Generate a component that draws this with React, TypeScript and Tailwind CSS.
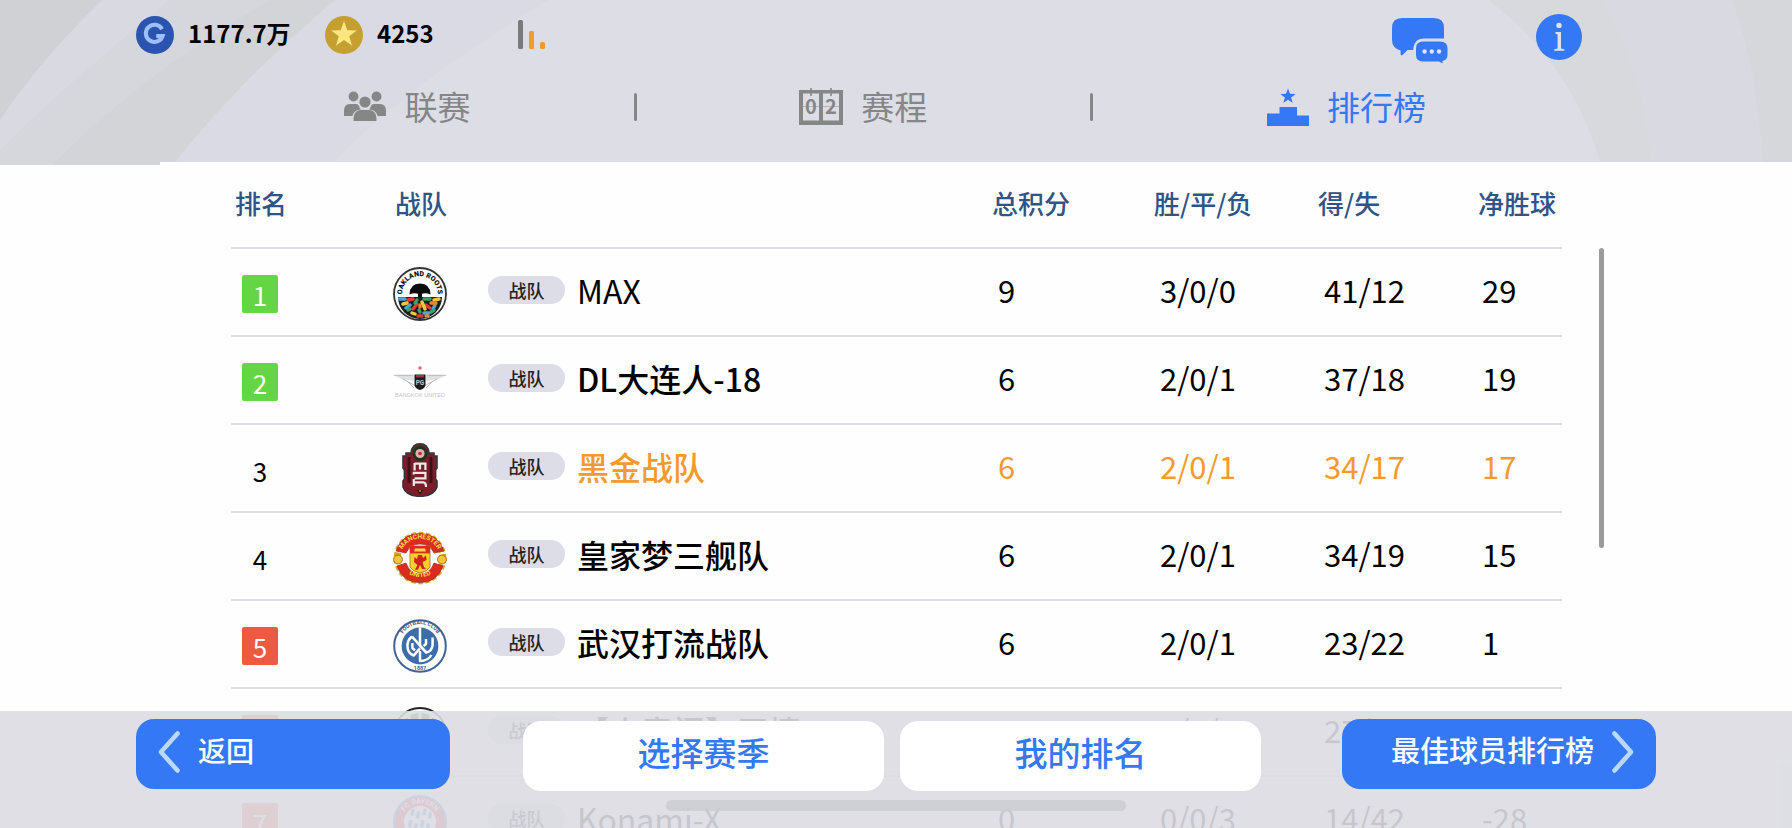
import type { ReactNode } from "react";
import { clsx } from "clsx";

type Team = {
  rank: number;
  logo: ReactNode;
  name: string;
  points: number;
  record: string;
  goals: string;
  diff: string;
  latin?: boolean;
  mine?: boolean;
};

const STAR = "M20 3 L24.4 15.2 L37 15.6 L27 23.4 L30.6 35.6 L20 28.4 L9.4 35.6 L13 23.4 L3 15.6 L15.6 15.2 Z";

function CoinIcon() {
  return (
    <svg viewBox="0 0 38 38" className="h-[38px] w-[38px]" aria-hidden="true">
      <circle cx="19" cy="19" r="19" fill="#2b54b0" />
      <path d="M26 13.2 A8.6 8.6 0 1 0 26.6 20 H20.2" fill="none" stroke="#9cc0ff" strokeWidth="4" />
    </svg>
  );
}

function StarCoinIcon() {
  return (
    <svg viewBox="0 0 38 38" className="h-[38px] w-[38px]" aria-hidden="true">
      <circle cx="19" cy="19" r="19" fill="#c5a030" />
      <path d={STAR} transform="translate(4 2.8) scale(0.75)" fill="#ffe680" />
    </svg>
  );
}

function SignalIcon() {
  return (
    <svg viewBox="0 0 28 30" className="h-[30px] w-7" aria-hidden="true">
      <rect x="0" y="0" width="5" height="29" rx="1.5" fill="#7a7a7c" />
      <rect x="11" y="11" width="5" height="18" rx="1.5" fill="#f39a2f" />
      <rect x="22" y="22" width="5" height="7" rx="1.5" fill="#f39a2f" />
    </svg>
  );
}

function ChatIcon() {
  return (
    <svg viewBox="0 0 56 46" className="h-[46px] w-14" aria-hidden="true">
      <path
        d="M10 0 H42 Q52 0 52 10 V20.6 H32 Q22 20.6 21.2 32 H15.5 L10.5 37 Q8.6 38.2 8.6 36 V32.6 Q0 30 0 22 V10 Q0 0 10 0 Z"
        fill="#3478f6"
      />
      <path
        d="M31 23.5 H48 Q55.5 23.5 55.5 30 V37 Q55.5 42 50.5 43 V45.6 L47 43.4 H31 Q24 43.4 24 37 V30 Q24 23.5 31 23.5 Z"
        fill="#3478f6"
      />
      <g fill="#dfe6f8">
        <circle cx="32.6" cy="33.5" r="2.2" />
        <circle cx="39.8" cy="33.5" r="2.2" />
        <circle cx="47" cy="33.5" r="2.2" />
      </g>
    </svg>
  );
}

function InfoIcon() {
  return (
    <svg viewBox="0 0 46 46" className="h-[46px] w-[46px]" aria-hidden="true">
      <circle cx="23" cy="23" r="23" fill="#3478f6" />
      <g fill="#dfe3ee">
        <circle cx="23" cy="11.4" r="2.7" />
        <path d="M19.4 18 H25 V34.4 L28.4 35.2 V36.8 H18.2 V35.2 L21.6 34.4 V20.4 L19.4 19.6 Z" />
      </g>
    </svg>
  );
}

function GroupIcon() {
  return (
    <svg viewBox="0 0 42 32" className="h-8 w-[42px]" fill="#868686" aria-hidden="true">
      <circle cx="9.5" cy="5.5" r="4.9" />
      <circle cx="32.5" cy="5.5" r="4.9" />
      <path d="M0 25 V20 Q0 13 6 13 H12 Q14.5 13 15 15 Q15.5 17.6 17 18.6 Q10 19 8.4 25 Z" />
      <path d="M42 25 V20 Q42 13 36 13 H30 Q27.5 13 27 15 Q26.5 17.6 25 18.6 Q32 19 33.6 25 Z" />
      <circle cx="21" cy="11" r="5.6" />
      <path d="M9.6 30 V26.5 Q10.4 19 17 19 H25 Q31.6 19 32.4 26.5 V30 Z" />
    </svg>
  );
}

function ScoreboardIcon() {
  return (
    <svg viewBox="0 0 44 38" className="h-[38px] w-11" aria-hidden="true">
      <path
        fillRule="evenodd"
        d="M0 2 H44 V37 H0 Z M4 5.5 V32.5 H20 V5.5 Z M24 5.5 V32.5 H40 V5.5 Z"
        fill="#868686"
      />
      <path d="M12 0 V8 M32 0 V8" stroke="#868686" strokeWidth="1.6" />
      <path d="M4 18.5 H20 M24 18.5 H40" stroke="#b4b4b8" strokeWidth="1" />
      <text x="12" y="26.4" textAnchor="middle" fontSize="20" fontWeight="700" fill="#868686">0</text>
      <text x="32" y="26.4" textAnchor="middle" fontSize="20" fontWeight="700" fill="#868686">2</text>
    </svg>
  );
}

function PodiumIcon() {
  return (
    <svg viewBox="0 0 42 38" className="h-[38px] w-[42px]" fill="#3478f6" aria-hidden="true">
      <path d={STAR} transform="translate(12 -1) scale(0.45)" />
      <path d="M0 25.5 H12.5 V19 H30 V27.5 H42 V38 H0 Z" />
    </svg>
  );
}

function OaklandLogo() {
  return (
    <svg viewBox="0 0 54 54" className="h-[54px] w-[54px]" aria-hidden="true">
      <defs>
        <path id="oak-arc" d="M9.8 32 A17.9 17.9 0 1 1 44.2 32" />
        <clipPath id="oak-roots">
          <path d="M5 30 H49 A22 22 0 0 1 5 30 Z" />
        </clipPath>
      </defs>
      <circle cx="27" cy="27" r="26" fill="#fff" stroke="#333" strokeWidth="1.8" />
      <text fontSize="7" fontWeight="900" fill="#111" className="font-['Roboto',sans-serif]">
        <textPath href="#oak-arc" startOffset="50%" textAnchor="middle">OAKLAND ROOTS</textPath>
      </text>
      <path d="M16.5 27.5 Q16.5 17 27 16.6 Q37.5 17 37.5 27.5 Q33 25.6 29 26.8 V31 H25 V26.8 Q21 25.6 16.5 27.5 Z" fill="#0d0d0d" />
      <g clipPath="url(#oak-roots)">
        <rect x="4" y="30" width="46" height="22" fill="#1c1c1c" />
        <g strokeWidth="3.4" strokeLinecap="round" fill="none">
          <path d="M6 32 L12 32 M13 41 L17 38 M31 46 L36 46 M42 38 L40 42" stroke="#4aa7dc" />
          <path d="M15 33 L20 32 M24 37 L20 42 M33 38 L37 41 M25 49 L29 49" stroke="#e23b34" />
          <path d="M10 37 L14 36 M29 35 L32 42 M41 33 L46 32 M19 46 L22 47" stroke="#f0c63e" />
          <path d="M31 32 L37 32 M24 33 L22 36 M17 42 L15 43 M38 45 L41 43 M26 43 L27 45" stroke="#35a368" />
          <path d="M38 36 L43 36 M27 38 L27 40 M33 49 L35 49" stroke="#ee8535" />
        </g>
      </g>
    </svg>
  );
}

function WingsLogo() {
  return (
    <svg viewBox="0 0 54 54" className="h-[54px] w-[54px]" aria-hidden="true">
      <circle cx="27" cy="13" r="1.8" fill="#e8706c" />
      <path d="M1 20 H21 V26 L16 25 Q8 25 1 20 Z M53 20 H33 V26 L38 25 Q46 25 53 20 Z" fill="#dfe0e1" />
      <path d="M1 20.3 H20 M53 20.3 H34 M10 24 L21 30 M44 24 L33 30 M14 26 L21 33 M40 26 L33 33" stroke="#b4b5b6" strokeWidth="0.9" />
      <path d="M21.5 19.5 H32.5 V30.5 Q31.5 33.5 27 35 Q22.5 33.5 21.5 30.5 Z" fill="#1b1b1d" />
      <path d="M23 20 H31 V22.4 H23 Z" fill="#b03131" />
      <text x="27" y="30" textAnchor="middle" fontSize="6.4" fontWeight="700" fill="#c6c6c6" className="font-['Roboto',sans-serif]">PG</text>
      <text x="27" y="42" textAnchor="middle" fontSize="5.6" fill="#c4c4c6" className="font-['Liberation_Sans',sans-serif]">BANGKOK UNITED</text>
    </svg>
  );
}

function MaroonLogo() {
  return (
    <svg viewBox="0 0 54 54" className="h-[54px] w-[54px]" aria-hidden="true">
      <path
        d="M18 10 Q19 0.8 27 0.8 Q35 0.8 36 10 H41 V13 H44 V25 L42.6 27 V36 L44 38 V44 Q41 53 27 53.4 Q13 53 10 44 V38 L11.4 36 V27 L10 25 V13 H13 V10 Z"
        fill="#7b1d28" stroke="#36343f" strokeWidth="1.6"
      />
      <path d="M16 14 V40 M38 14 V40" stroke="#3d1119" strokeWidth="3" />
      <circle cx="27" cy="10.5" r="7.4" fill="#1e3320" />
      <circle cx="27" cy="10.5" r="4.6" fill="#e9aeb0" />
      <circle cx="27" cy="10.5" r="1.8" fill="#b92a38" />
      <g fill="none" stroke="#efe8e8" strokeWidth="2.2">
        <path d="M21.6 20.6 H32.4 V27 M21.6 20 V27.4 M27 21 V26.4" />
        <path d="M20.8 31.4 V29.8 H32.4 V35.4 H21.6 M20.8 39.4 H30.4 Q33 39.6 33 44 M20.8 36 V43" />
      </g>
      <path d="M24 47 L27 51.4 L30 47 Z" fill="#17120f" />
      <circle cx="27" cy="48" r="1" fill="#d99a3f" />
    </svg>
  );
}

function ManchesterLogo() {
  return (
    <svg viewBox="0 0 54 54" className="h-[54px] w-[54px]" aria-hidden="true">
      <defs>
        <path id="mu-top" d="M7 25 A20.2 20.2 0 0 1 47 25" />
        <path id="mu-bottom" d="M8 36 A23 23 0 0 0 46 36" />
      </defs>
      <circle cx="27" cy="27" r="22.8" fill="none" stroke="#d9a62c" strokeWidth="7" strokeDasharray="4.2 2.4" />
      <circle cx="27" cy="27" r="18" fill="#fff" />
      <path d="M3 20 Q9 2.6 27 2.6 Q45 2.6 51 20 L41 22 Q37 13 27 13 Q17 13 13 22 Z" fill="#da2c20" stroke="#8f3a1c" strokeWidth="0.7" />
      <path d="M4 35 L13 32 Q17 43 27 43 Q37 43 41 32 L50 35 Q44 51.6 27 51.6 Q10 51.6 4 35 Z" fill="#da2c20" stroke="#8f3a1c" strokeWidth="0.7" />
      <text fontSize="6.6" fontWeight="700" fill="#ffd94a" className="font-['Roboto',sans-serif]">
        <textPath href="#mu-top" startOffset="50%" textAnchor="middle">MANCHESTER</textPath>
      </text>
      <text fontSize="6.6" fontWeight="700" fill="#ffd94a" className="font-['Roboto',sans-serif]">
        <textPath href="#mu-bottom" startOffset="50%" textAnchor="middle">UNITED</textPath>
      </text>
      <circle cx="5" cy="28.5" r="4.4" fill="#f5c537" stroke="#a85c1e" strokeWidth="0.9" />
      <circle cx="49" cy="28.5" r="4.4" fill="#f5c537" stroke="#a85c1e" strokeWidth="0.9" />
      <path d="M17 15 H37 V36 Q35 40 27 42 Q19 40 17 36 Z" fill="#f9cf2e" stroke="#a8701e" strokeWidth="0.8" />
      <path d="M17 15 H37 V22.4 H17 Z" fill="#da2c20" />
      <path d="M21 20.6 L22 17.6 H32 L33 20.6 Z" fill="#ffd94a" />
      <path d="M25 24 H29 L30 27 L33 24.6 L33.6 29 L29.6 31 L31 36 L33 38 H29 L27 34 L25 38.8 H22 L24.4 34 L21 31 L21.4 26 L24 28 Z" fill="#cf2419" />
    </svg>
  );
}

function BlueClubLogo() {
  return (
    <svg viewBox="0 0 54 54" className="h-[54px] w-[54px]" aria-hidden="true">
      <defs>
        <path id="bc-top" d="M7.6 31 A20.2 20.2 0 1 1 46.4 31" />
      </defs>
      <circle cx="27" cy="27" r="25.8" fill="#fff" stroke="#3f6491" strokeWidth="2" />
      <circle cx="27" cy="27" r="18.4" fill="#3b6daa" />
      <text fontSize="5.4" fontWeight="700" fill="#3b5f8f" className="font-['Roboto',sans-serif]">
        <textPath href="#bc-top" startOffset="50%" textAnchor="middle">FOOTBALL CLUB</textPath>
      </text>
      <text x="27" y="50.6" textAnchor="middle" fontSize="5.4" fontWeight="700" fill="#3b5f8f" className="font-['Roboto',sans-serif]">1887</text>
      <g fill="none" stroke="#fff" strokeWidth="2.5" strokeLinejoin="round">
        <path d="M27 8.6 V27 L33.4 33.6 Q39 32 39.6 26 V18.6" />
        <path d="M33 20 V25 L30.6 27 M19 17.6 Q14.4 21 14.4 27 Q14.6 34 20.6 36.6 L27 29.4" />
        <path d="M19 17.6 L33.4 33.6 M19.4 24 V29 L22 31.4 M27 32 V42 Q35 42 38.4 36" />
      </g>
    </svg>
  );
}

function StripedLogo() {
  return (
    <svg viewBox="0 0 54 54" className="h-[54px] w-[54px]" aria-hidden="true">
      <circle cx="27" cy="27" r="26" fill="#fff" stroke="#222" strokeWidth="2" />
      <circle cx="27" cy="27" r="21" fill="#4b4b50" />
      <path d="M16 9 L21 46 M27 5 V49 M38 9 L33 46" stroke="#fff" strokeWidth="3" />
    </svg>
  );
}

function BayernLogo() {
  return (
    <svg viewBox="0 0 54 54" className="h-[54px] w-[54px]" aria-hidden="true">
      <defs>
        <path id="fcb-top" d="M8.6 32 A19 19 0 1 1 45.4 32" />
        <clipPath id="fcb-core">
          <circle cx="27" cy="27" r="15" />
        </clipPath>
      </defs>
      <circle cx="27" cy="27" r="26" fill="#e0283c" stroke="#3c86c8" strokeWidth="2" />
      <circle cx="27" cy="27" r="16" fill="#fff" />
      <text fontSize="7" fontWeight="700" fill="#fff" className="font-['Roboto',sans-serif]">
        <textPath href="#fcb-top" startOffset="50%" textAnchor="middle">FC BAYERN</textPath>
      </text>
      <g clipPath="url(#fcb-core)" stroke="#3c86c8" strokeWidth="3.4" strokeDasharray="7 5">
        <path d="M14 44 L21 10 M20 47 L27 10 M26 44 L33 10 M32 47 L39 10" />
      </g>
    </svg>
  );
}

function Chevron({ flip }: { flip?: boolean }) {
  return (
    <svg viewBox="0 0 22 42" className={clsx("h-[42px] w-[22px]", flip && "rotate-180")} aria-hidden="true">
      <path d="M19.5 2.5 L3 21 L19.5 39.5" fill="none" stroke="#bcd8ff" strokeWidth="4.6" strokeLinecap="round" strokeLinejoin="round" />
    </svg>
  );
}

// Curved stripes behind the top bar
function HeaderBackdrop() {
  return (
    <svg viewBox="0 0 1792 165" preserveAspectRatio="none" className="absolute top-0 left-0 h-[165px] w-full" aria-hidden="true">
      <path d="M0 0 H1792 V162 H160 V165 H0 Z" fill="#dddde6" />
      <path d="M0 0 H548 Q400 90 335 162 H160 V165 H0 Z" fill="#d9dae3" />
      <path d="M260 0 H335 Q240 80 175 162 H160 V165 H48 Q140 70 260 0 Z" fill="#d3d4d8" />
      <path d="M160 0 H270 Q140 75 52 165 H0 V120 Z" fill="#d6d7dd" />
      <path d="M102 0 H170 Q60 90 0 150 V120 Q40 60 102 0 Z" fill="#d8d9e1" />
      <path d="M0 0 H102 Q40 60 0 120 Z" fill="#d0d1d4" />
      <path d="M1488 0 H1792 V162 H1600 Q1570 60 1488 0 Z" fill="#d8d9dd" />
      <path d="M1590 0 H1732 Q1758 70 1762 162 H1651 Q1645 70 1600 0 Z" fill="#d9dae1" />
      <path d="M1732 0 H1792 V162 H1762 Q1758 70 1732 0 Z" fill="#d6d7da" />
    </svg>
  );
}

const teams: Team[] = [
  { rank: 1, logo: <OaklandLogo />, name: "MAX", points: 9, record: "3/0/0", goals: "41/12", diff: "29", latin: true },
  { rank: 2, logo: <WingsLogo />, name: "DL大连人-18", points: 6, record: "2/0/1", goals: "37/18", diff: "19" },
  { rank: 3, logo: <MaroonLogo />, name: "黑金战队", points: 6, record: "2/0/1", goals: "34/17", diff: "17", mine: true },
  { rank: 4, logo: <ManchesterLogo />, name: "皇家梦三舰队", points: 6, record: "2/0/1", goals: "34/19", diff: "15" },
  { rank: 5, logo: <BlueClubLogo />, name: "武汉打流战队", points: 6, record: "2/0/1", goals: "23/22", diff: "1" },
  { rank: 6, logo: <StripedLogo />, name: "【小意阁】王情", points: 3, record: "1/0/2", goals: "27/25", diff: "2" },
  { rank: 7, logo: <BayernLogo />, name: "Konami-X", points: 0, record: "0/0/3", goals: "14/42", diff: "-28", latin: true },
];

function TeamRow({ team }: { team: Team }) {
  return (
    <tr className={clsx("h-[88px] border-b-2 border-[#dcdce2]", team.mine ? "text-[#f39a2f]" : "text-black")}>
      <td className="pt-1 pl-[11px]">
        <span
          className={clsx(
            "flex h-[38px] w-9 items-center justify-center rounded-xs text-[26px]",
            team.rank <= 2 && "bg-[#64d645] text-white",
            team.rank >= 5 && "bg-[#ec5a42] text-white",
            team.rank > 2 && team.rank < 5 && "text-black",
          )}
        >
          {team.rank}
        </span>
      </td>
      <td className="pt-1">{team.logo}</td>
      <td className="pb-1">
        <div className="flex items-center gap-3">
          <span className="flex h-7 w-[77px] items-center justify-center rounded-full bg-[#dddde7] text-lg font-medium text-[#222]">战队</span>
          <span className={clsx("text-[32px]", !team.latin && "font-medium")}>{team.name}</span>
        </div>
      </td>
      <td className="pb-1 pl-2 text-[31px]">{team.points}</td>
      <td className="pb-1 pl-2 text-[31px]">{team.record}</td>
      <td className="pb-1 pl-2 text-[31px]">{team.goals}</td>
      <td className="pb-1 pl-1.5 text-[31px]">{team.diff}</td>
    </tr>
  );
}

export default function App() {
  return (
    <div className="relative h-screen overflow-hidden bg-[#fefefe] font-['Noto_Sans_CJK_SC',sans-serif]">
      <header className="relative h-[162px]">
        <HeaderBackdrop />
        <div className="relative flex h-[74px] items-center pr-[210px] pb-1 pl-[136px]">
          <div className="flex w-[189px] items-center gap-[14px]">
            <CoinIcon />
            <span className="pb-1 text-2xl font-bold">1177.7万</span>
          </div>
          <div className="flex w-[193px] items-center gap-[14px]">
            <StarCoinIcon />
            <span className="pb-1 text-2xl font-bold">4253</span>
          </div>
          <SignalIcon />
          <div className="ml-auto flex items-center gap-[88px] pt-1">
            <button type="button" aria-label="聊天" className="pt-2">
              <ChatIcon />
            </button>
            <button type="button" aria-label="信息">
              <InfoIcon />
            </button>
          </div>
        </div>

        <nav className="relative flex h-[66px] items-center pr-[192px] pl-[181px] text-[33px] text-[#868686]">
          <a href="#league" className="flex flex-1 items-center justify-center gap-[18px]">
            <GroupIcon />
            联赛
          </a>
          <span className="h-7 w-[3px] rounded-full bg-[#868686]" />
          <a href="#schedule" className="flex flex-1 items-center justify-center gap-[18px]">
            <ScoreboardIcon />
            赛程
          </a>
          <span className="h-7 w-[3px] rounded-full bg-[#868686]" />
          <a href="#ranking" className="flex flex-[1.12] items-center justify-center gap-[18px] text-[#3478f6]">
            <PodiumIcon />
            排行榜
          </a>
        </nav>
      </header>

      <main className="flex pr-[188px] pl-[231px]">
        <table className="flex-1 table-fixed border-collapse text-left">
          <colgroup>
            <col className="w-[162px]" />
            <col className="w-[95px]" />
            <col />
            <col className="w-[162px]" />
            <col className="w-[164px]" />
            <col className="w-[160px]" />
            <col className="w-[86px]" />
          </colgroup>
          <thead>
            <tr className="h-[86px] border-b-2 border-[#dcdce2] text-[26px] text-[#2f5488]">
              <th className="pb-1 pl-1 font-medium">排名</th>
              <th className="pb-1 pl-0.5 font-medium" colSpan={2}>战队</th>
              <th className="pb-1 pl-0.5 font-medium">总积分</th>
              <th className="pb-1 pl-0.5 font-medium">胜/平/负</th>
              <th className="pb-1 pl-0.5 font-medium">得/失</th>
              <th className="pb-1 pl-0.5 font-medium whitespace-nowrap">净胜球</th>
            </tr>
          </thead>
          <tbody>
            {teams.map((team) => (
              <TeamRow key={team.rank} team={team} />
            ))}
          </tbody>
        </table>
        <div className="mt-[86px] ml-[37px] h-[300px] w-[5px] rounded-full bg-[#9b9b9b]" />
      </main>

      <footer className="absolute inset-x-0 bottom-0 h-[117px] bg-[#dbdce2]/90">
        <div className="flex items-start px-[136px] pt-2">
          <button type="button" className="flex h-[70px] w-[314px] items-center gap-[18px] rounded-[18px] bg-[#3478f6] px-[22px] pb-1 text-[28px] font-medium text-white">
            <Chevron />
            <span className="pb-1">返回</span>
          </button>
          <div className="ml-[73px] flex gap-4 pt-0.5">
            <button type="button" className="h-[70px] w-[361px] rounded-[18px] bg-white pb-1.5 text-[33px] font-medium text-[#3478f6]">选择赛季</button>
            <button type="button" className="h-[70px] w-[361px] rounded-[18px] bg-white pb-1.5 text-[33px] font-medium text-[#3478f6]">我的排名</button>
          </div>
          <button type="button" className="ml-auto flex h-[70px] w-[314px] items-center justify-end gap-[18px] rounded-[18px] bg-[#3478f6] px-[22px] pb-1 text-[29px] font-medium text-white">
            <span className="pb-1">最佳球员排行榜</span>
            <Chevron flip />
          </button>
        </div>
        <div className="mx-auto mt-[9px] h-[11px] w-[460px] rounded-full bg-[#cbccd2]/80" />
      </footer>
    </div>
  );
}
